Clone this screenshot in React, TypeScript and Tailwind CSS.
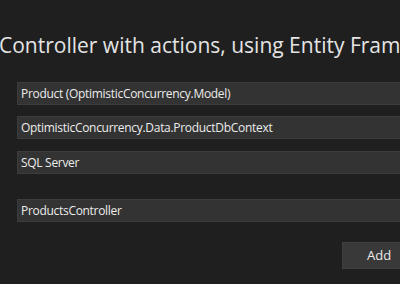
export default function App() {
  const font = { fontFamily: '"Open Sans", "Noto Sans", sans-serif' };
  return (
    <div
      className="w-[400px] h-[284px] overflow-hidden bg-[#1f1f1f] text-[#e6e6e6]"
      style={font}
    >
      <div className="pt-[31px] ml-[-1px] whitespace-nowrap text-[21px] leading-[28px] text-[#e4e4e4]">
        Controller with actions, using Entity Framework
      </div>

      <div className="flex flex-col pl-[17px] pt-[23px]">
        <Field text="Product (OptimisticConcurrency.Model)" />
        <Field text="OptimisticConcurrency.Data.ProductDbContext" className="mt-[11px]" />
        <Field text="SQL Server" className="mt-[12px]" />
        <Field text="ProductsController" className="mt-[25px]" />
      </div>

      <div className="flex justify-end mt-[20px]">
        <button className="w-[70px] h-[27px] bg-[#393939] border border-[#3f3f3f] text-[13px] text-[#ececec] text-left pl-[24px] -mr-[12px]">
          Add
        </button>
      </div>
    </div>
  );
}

function Field({ text, className = "" }: { text: string; className?: string }) {
  return (
    <div
      className={
        "w-[420px] h-[23px] bg-[#333333] border border-[#3c3c3c] flex items-center pl-[3px] text-[12px] tracking-[-0.3px] text-[#ececec] whitespace-nowrap " +
        className
      }
    >
      {text}
    </div>
  );
}
